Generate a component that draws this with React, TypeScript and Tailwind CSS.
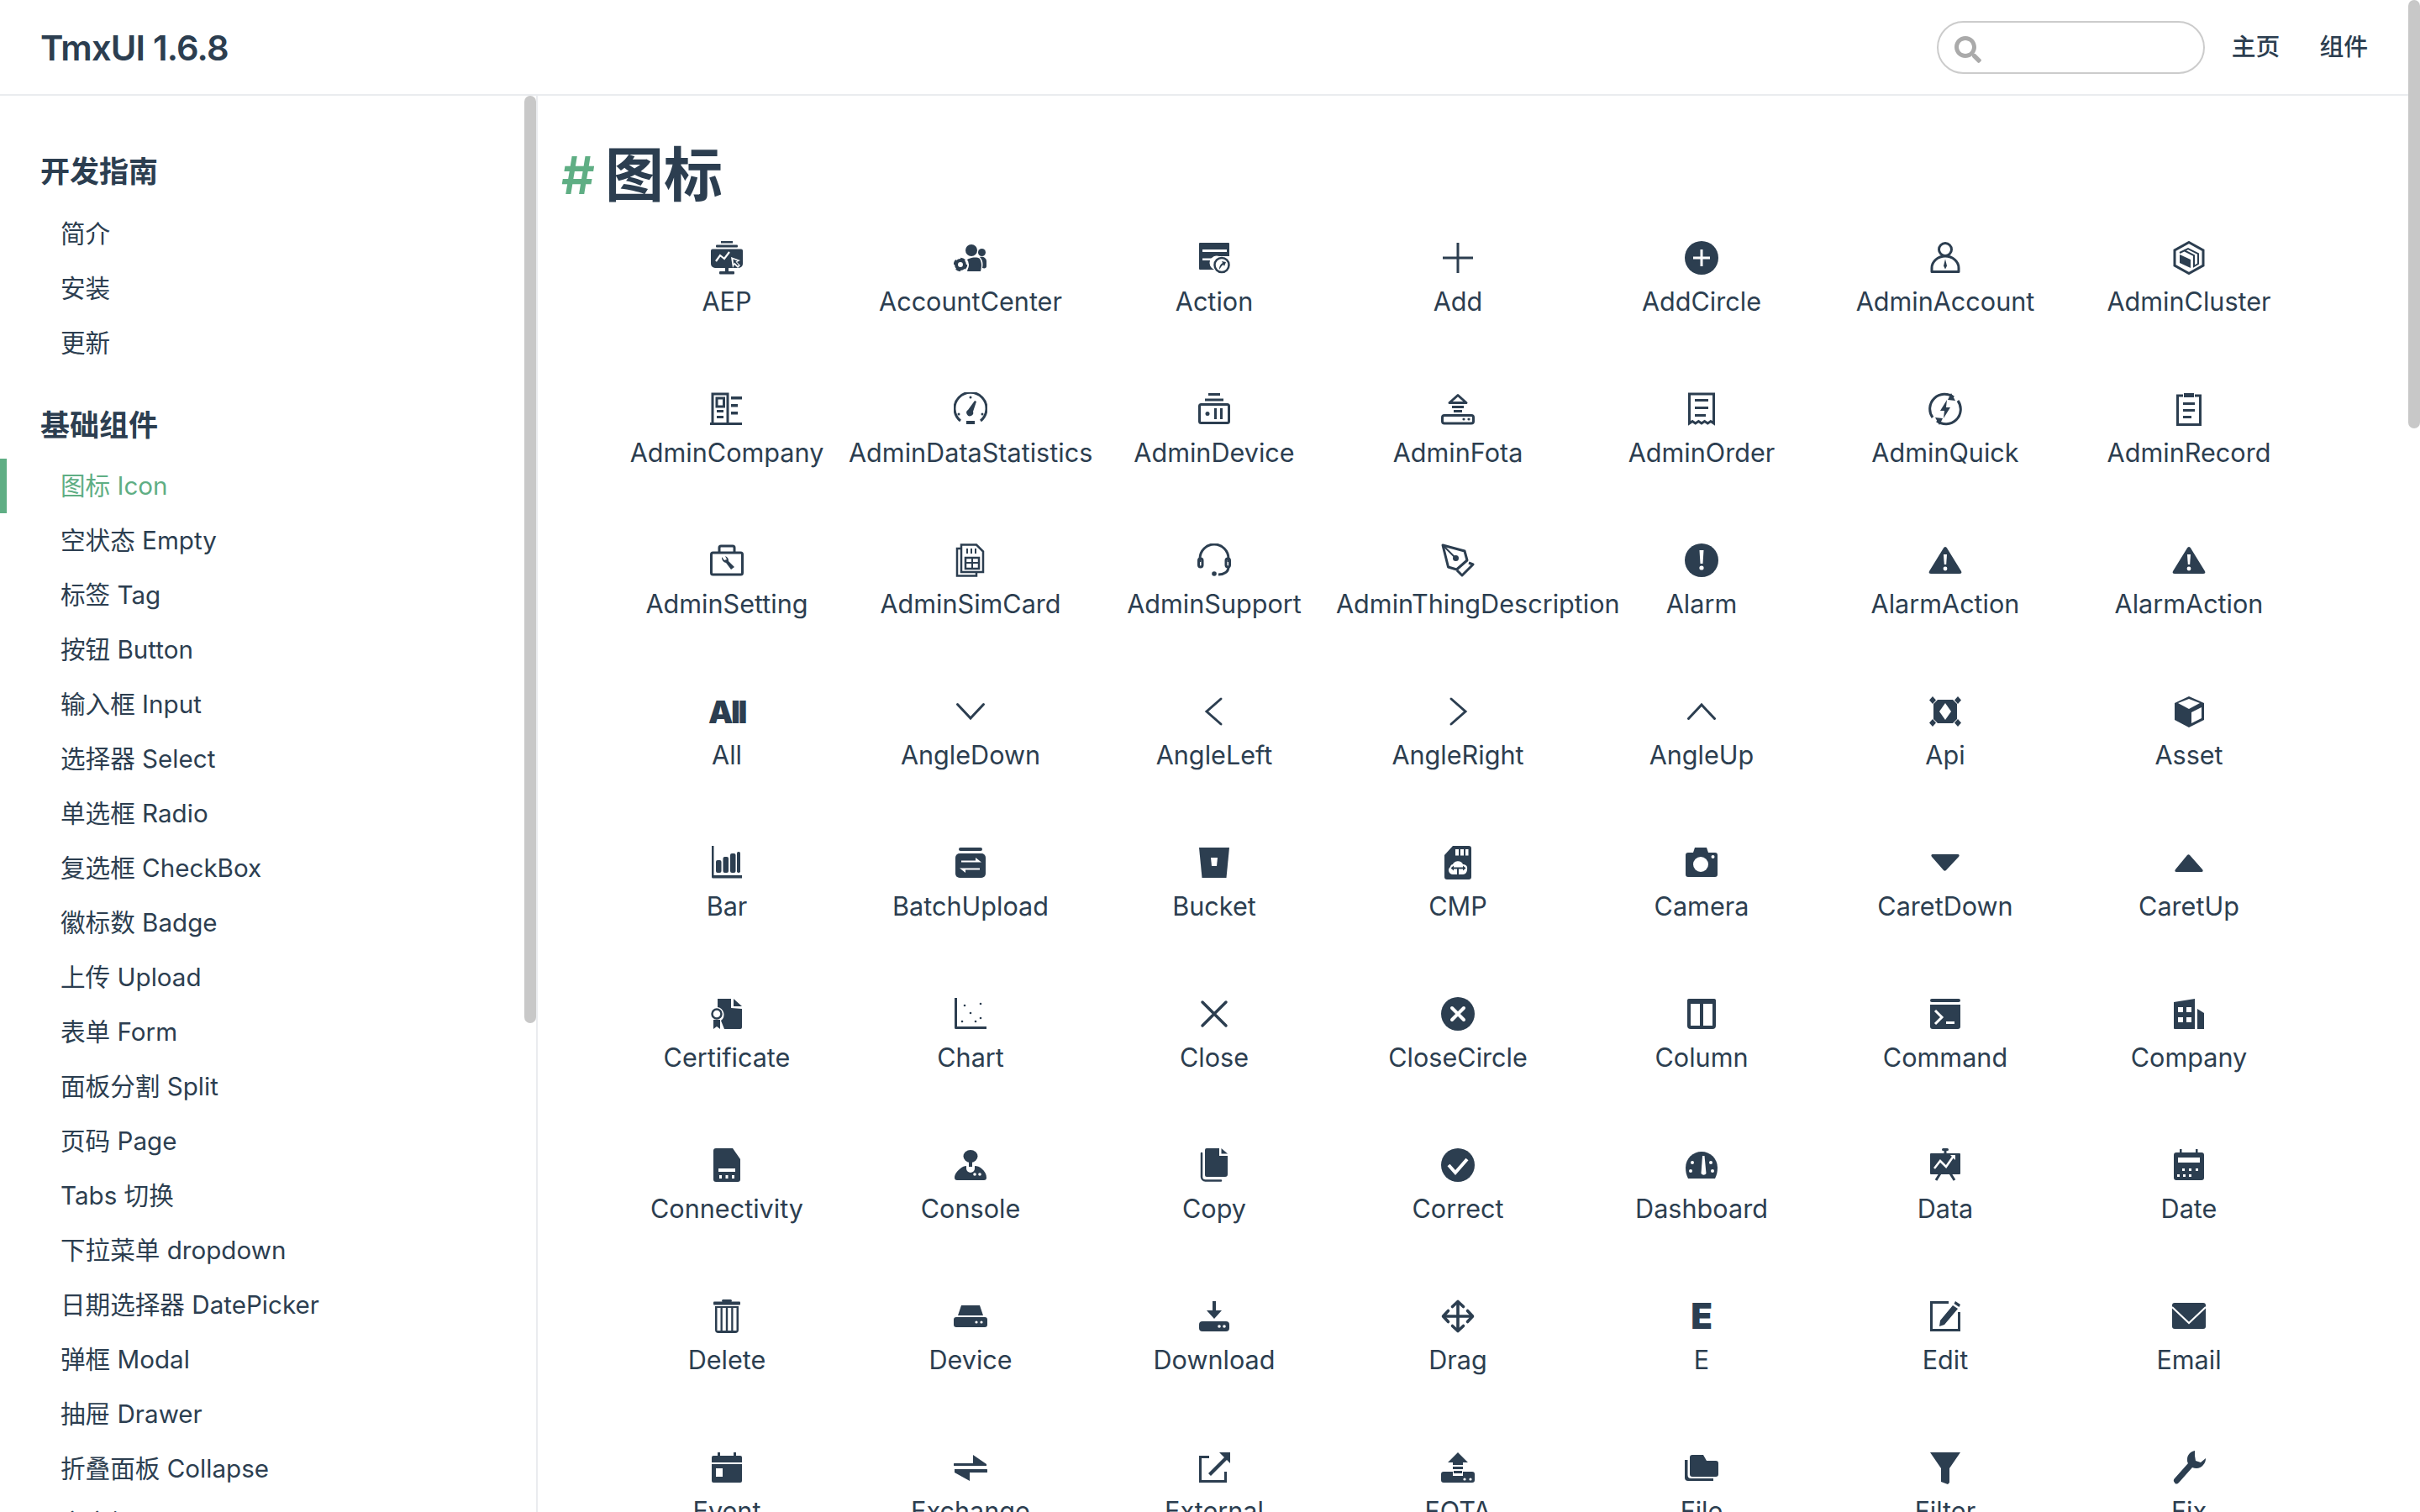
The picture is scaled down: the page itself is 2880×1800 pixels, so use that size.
import type { ReactNode } from "react";
import { FaSearch } from "react-icons/fa";

const W = "#fff";

function Svg({ children }: { children: ReactNode }) {
  return (
    <svg viewBox="0 0 40 40" className="w-10 h-10 fill-current">
      {children}
    </svg>
  );
}

// outline icons share a stroke and no fill
function Line({ children, w = 3 }: { children: ReactNode; w?: number }) {
  return (
    <g fill="none" stroke="currentColor" strokeWidth={w}>
      {children}
    </g>
  );
}

function Gear({ x, y, r }: { x: number; y: number; r: number }) {
  return (
    <g>
      <circle cx={x} cy={y} r={r * 0.62} fill="none" stroke="currentColor" strokeWidth={r * 0.5} />
      <circle cx={x} cy={y} r={r * 0.88} fill="none" stroke="currentColor" strokeWidth={r * 0.3} strokeDasharray={`${r * 0.69} ${r * 0.69}`} />
    </g>
  );
}

const icons: Record<string, ReactNode> = {
  AEP: (
    <>
      <rect x="13" y="0" width="14" height="2.5" />
      <rect x="7" y="4.5" width="26" height="3" rx="1" />
      <path d="M3 9.5h34a2 2 0 0 1 2 2V27a5 5 0 0 1-5 5H6a5 5 0 0 1-5-5V11.500a2 2 0 0 1 2-2z" />
      <rect x="18" y="32" width="4" height="4" />
      <rect x="11" y="36" width="18" height="3.500" rx="1" />
      <polyline points="7,24 12,17 17,21 23,13" fill="none" stroke={W} strokeWidth="2.2" />
      <path d="M25 19l11 4-4 2 4 4-3 3-4-4-2 4z" fill={W} />
      <path d="M27.500 21.500l5 2-2 1 3.500 4-1 1-4-4-1 2z" />
    </>
  ),
  AccountCenter: (
    <>
      <circle cx="21" cy="11" r="7" />
      <circle cx="33.500" cy="13.500" r="4.500" />
      <path d="M16 36l2-8-4-4c3-4 13-6 17-3 3 5 2 11 1 15z" />
      <path d="M31 19c4-1 8 1 8 5v6c0 2-2 3-5 2 1-4 1-9-3-13z" />
      <circle cx="8" cy="28" r="10" fill={W} />
      <Gear x={8} y={28} r={8} />
    </>
  ),
  Action: (
    <>
      <path d="M3 2h34a1 1 0 0 1 1 1v15H26a8 8 0 0 0-6 16H3a1 1 0 0 1-1-1V3a1 1 0 0 1 1-1z" />
      <rect x="6" y="10" width="29" height="3" fill={W} />
      <rect x="6" y="20.500" width="11" height="2.500" fill={W} />
      <Line w={2.5}>
        <circle cx="29" cy="28.500" r="8.500" />
      </Line>
      <path d="M26 34c0-4 1-6 4-8l-1-2 5 1-2 5-1-2c-2 1-3 3-5 6z" />
    </>
  ),
  Add: (
    <Line>
      <path d="M2 20h36M20 2v36" />
    </Line>
  ),
  AddCircle: (
    <>
      <circle cx="20" cy="20" r="20" />
      <path d="M18.500 10h3v8.500H30v3h-8.500V30h-3v-8.500H10v-3h8.500z" fill={W} />
    </>
  ),
  AdminAccount: (
    <>
      <Line>
        <circle cx="20" cy="10" r="7.500" />
        <path d="M4 36.500V32a16 14 0 0 1 32 0v4.500z" strokeLinejoin="round" />
      </Line>
      <path d="M20 21.500l2 8-2 4-2-4z" />
    </>
  ),
  AdminCluster: (
    <>
      <Line>
        <path d="M20 1.500L37 11v18l-17 9.500L3 29V11z" />
        <path d="M9 14l10-5 12 6v12l-5 3V17L14 11" strokeWidth="2" />
      </Line>
      <path d="M9 16l13 6v10l-13-6z" />
    </>
  ),
  AdminCompany: (
    <>
      <Line>
        <path d="M3 38V2h18v36" />
        <rect x="8" y="7" width="8.500" height="10" />
      </Line>
      <rect x="0" y="36" width="38" height="3" />
      <rect x="8" y="21" width="8" height="3" />
      <rect x="8" y="28" width="8" height="3" />
      <rect x="25" y="5" width="13" height="3.500" />
      <rect x="25" y="14" width="8" height="3.500" />
      <rect x="25" y="23" width="8" height="3.500" />
    </>
  ),
  AdminDataStatistics: (
    <>
      <Line>
        <path d="M8 34A19 19 0 1 1 32 34" />
      </Line>
      <path d="M25 10l2 1-4 12a4 4 0 1 1-6-2z" />
      <circle cx="20" cy="6" r="1.500" />
      <circle cx="6" cy="26" r="1.500" />
      <circle cx="34" cy="26" r="1.500" />
      <rect x="15" y="34" width="10" height="4" />
    </>
  ),
  AdminDevice: (
    <>
      <rect x="13" y="1" width="14" height="3" />
      <rect x="9" y="7.500" width="22" height="3" />
      <Line>
        <rect x="2.500" y="14.500" width="35" height="22" rx="2" />
      </Line>
      <circle cx="12" cy="25.500" r="2.500" />
      <rect x="20" y="19" width="3" height="13" />
      <rect x="27" y="19" width="3" height="13" />
    </>
  ),
  AdminFota: (
    <>
      <Line>
        <path d="M20 3.500L30 12.500H10z" strokeLinejoin="round" />
        <rect x="1.500" y="27.500" width="37" height="9.500" rx="2.500" />
      </Line>
      <rect x="13" y="16" width="14" height="3" />
      <rect x="15" y="21" width="10" height="3" />
      <circle cx="27" cy="32" r="1.600" />
      <circle cx="33" cy="32" r="1.600" />
    </>
  ),
  AdminOrder: (
    <>
      <Line>
        <path d="M5.500 2h29v35l-3.600-2.500-3.600 2.500-3.700-2.500-3.600 2.500-3.600-2.500-3.700 2.500-3.600-2.500-3.600 2.500z" />
      </Line>
      <rect x="12" y="8" width="16" height="3" />
      <rect x="12" y="17" width="16" height="3" />
      <rect x="12" y="26" width="13" height="3" />
    </>
  ),
  AdminQuick: (
    <>
      <Line>
        <path d="M30 6A17.500 17.500 0 0 0 5 30" />
        <path d="M10 34A17.500 17.500 0 0 0 35 10" />
      </Line>
      <path d="M27 1l5 9-9-1zM13 39l-5-9 9 1z" />
      <path d="M22 9l-8 13h5l-1 9 8-13h-5z" />
    </>
  ),
  AdminRecord: (
    <>
      <Line>
        <path d="M13 4H6.500v34.500h27V4H27" />
      </Line>
      <rect x="14" y="1" width="12" height="5" />
      <rect x="13" y="12" width="14" height="3" />
      <rect x="13" y="20" width="14" height="3" />
      <rect x="13" y="28" width="10" height="3" />
    </>
  ),
  AdminSetting: (
    <>
      <Line>
        <rect x="1.500" y="11" width="37" height="26" rx="2" />
        <path d="M11 11V5a2 2 0 0 1 2-2h14a2 2 0 0 1 2 2v6" />
      </Line>
      <path d="M14 16a6 6 0 0 0 5 7l6 8 4-3-7-7a6 6 0 0 0-4-6l2 4-3 1z" />
    </>
  ),
  AdminSimCard: (
    <>
      <Line w={2.5}>
        <path d="M9 1.500h18l8 8V34H9z" />
        <path d="M9 6H4v32.500h23V34" />
        <rect x="14" y="17" width="16" height="13" />
      </Line>
      <rect x="15" y="6" width="2" height="6" />
      <rect x="20" y="6" width="2" height="6" />
      <rect x="25" y="6" width="2" height="6" />
      <path d="M21 17h2v13h-2zM14 22h16v2H14z" />
    </>
  ),
  AdminSupport: (
    <>
      <Line>
        <path d="M3 22v-4a17 17 0 0 1 34 0v4" />
        <rect x="1.500" y="18" width="4.500" height="10" rx="2.200" />
        <rect x="34" y="18" width="4.500" height="10" rx="2.200" />
        <path d="M37 28c0 6-6 9-12 9" />
      </Line>
      <circle cx="20" cy="36" r="2.800" />
    </>
  ),
  AdminThingDescription: (
    <>
      <Line>
        <path d="M2 2l26 7 3 11-12.500 11-10-3z" strokeLinejoin="round" />
        <path d="M33 23l5 2-13 13-6-6" strokeLinejoin="round" />
      </Line>
      <path d="M2 2l15 15" stroke="currentColor" strokeWidth="2" fill="none" />
      <circle cx="17.500" cy="17.500" r="3.500" />
    </>
  ),
  Alarm: (
    <>
      <circle cx="20" cy="20" r="20" />
      <path d="M17.500 8h5l-1 16h-3z" fill={W} />
      <circle cx="20" cy="29" r="2.600" fill={W} />
    </>
  ),
  AlarmAction: (
    <>
      <path d="M20 4c1 0 2 1 3 3l16 26c1 2 0 3-2 3H3c-2 0-3-1-2-3L17 7c1-2 2-3 3-3z" />
      <path d="M18 13h4l-.8 12h-2.400z" fill={W} />
      <circle cx="20" cy="30" r="2.400" fill={W} />
    </>
  ),
  AngleDown: (
    <Line>
      <path d="M4.500 11.500L20 28l15.500-16.500" strokeLinecap="round" />
    </Line>
  ),
  AngleLeft: (
    <Line>
      <path d="M28 5L11 20l17 15" strokeLinecap="round" />
    </Line>
  ),
  AngleRight: (
    <Line>
      <path d="M12 5l17 15-17 15" strokeLinecap="round" />
    </Line>
  ),
  AngleUp: (
    <Line>
      <path d="M4.500 28.500L20 12l15.500 16.500" strokeLinecap="round" />
    </Line>
  ),
  Api: (
    <>
      <path d="M11 6h18l5 5v18l-5 5H11l-5-5V11z" />
      <path d="M20 10l7 10-7 10-7-10z" fill={W} />
      <path d="M5 2l4 4.500L5 11 1 6.500zM35 2l4 4.500-4 4.500-4-4.500zM5 29l4 4.500L5 38l-4-4.500zM35 29l4 4.500-4 4.500-4-4.500z" />
    </>
  ),
  Asset: (
    <>
      <path d="M20 2l18 8v20l-18 9-17-9V10z" />
      <path d="M7 10l13-5 13 5-13 7z" fill={W} />
      <path d="M23 21l12-6v13l-12 6z" fill={W} />
    </>
  ),
  Bar: (
    <>
      <path d="M2 0h2.500v35H38v3.500H3.500a1.500 1.500 0 0 1-1.500-1.500z" />
      <rect x="7" y="17" width="6.500" height="15" rx="2" />
      <rect x="15.500" y="13" width="6.500" height="19" rx="2" />
      <rect x="24" y="9" width="6.500" height="23" rx="2" />
      <rect x="32" y="7" width="4" height="25" rx="1.700" />
    </>
  ),
  BatchUpload: (
    <>
      <rect x="6" y="2" width="28" height="4" rx="2" />
      <rect x="2" y="9" width="36" height="29" rx="5" />
      <path d="M9 17.500h17V14l7 5.500H9zM31 28.500H14V32l-7-5.500h24z" fill={W} />
    </>
  ),
  Bucket: (
    <>
      <path d="M2 2h36l-3.500 36h-29z" />
      <path d="M16 14h8l-1 10h-6z" fill={W} />
    </>
  ),
  CMP: (
    <>
      <path d="M14 0h19a3 3 0 0 1 3 3v34a3 3 0 0 1-3 3H7a3 3 0 0 1-3-3V11z" />
      <rect x="17" y="4" width="4" height="7.500" fill={W} />
      <rect x="23" y="4" width="4" height="7.500" fill={W} />
      <rect x="29" y="4" width="3.500" height="7.500" fill={W} />
      <path d="M14 34a5 5 0 0 1-3-9c0-1 1-3 3-3 1-4 10-6 12 0 3 0 6 2 5 6 0 3-2 6-5 6z" fill={W} />
      <path d="M13 26.500h15M20 26.500v7.500" stroke="currentColor" strokeWidth="2" fill="none" />
      <path d="M15 23.500v6l-3.500-3zM26 23.500v6l3.500-3z" />
    </>
  ),
  Camera: (
    <>
      <path d="M12 2h14l2 6h8a3 3 0 0 1 3 3v23a3 3 0 0 1-3 3H4a3 3 0 0 1-3-3V11a3 3 0 0 1 3-3h6z" />
      <circle cx="19" cy="22" r="9" fill={W} />
      <circle cx="33.500" cy="13" r="2" fill={W} />
    </>
  ),
  CaretDown: <path d="M5 10h30c2 0 2 2 1 3L21 29c-1 1-2 1-3 0L4 13c-1-1-1-3 1-3z" />,
  CaretUp: <path d="M5 31h30c2 0 2-2 1-3L21 11c-1-1-2-1-3 0L4 28c-1 1-1 3 1 3z" />,
  Certificate: (
    <>
      <path d="M9 2h16v11l13 1v22a2 2 0 0 1-2 2H17l-4-10a9 9 0 0 0-4-16z" />
      <path d="M28 2l10 9H28z" />
      <Line w={2.5}>
        <circle cx="8" cy="20" r="5.500" />
      </Line>
      <path d="M4 27h8v11l-4-3-4 3z" />
    </>
  ),
  Chart: (
    <>
      <path d="M1 1h3v34h35v3H2.500A1.500 1.500 0 0 1 1 36.500z" />
      <circle cx="13" cy="10" r="1.300" />
      <circle cx="32" cy="8" r="1.300" />
      <circle cx="20" cy="19" r="1.300" />
      <circle cx="10" cy="29" r="1.300" />
      <circle cx="26" cy="29" r="1.300" />
      <circle cx="32" cy="25" r="1.300" />
    </>
  ),
  Close: (
    <Line w={3.5}>
      <path d="M6 6l28 28M34 6L6 34" strokeLinecap="round" />
    </Line>
  ),
  CloseCircle: (
    <>
      <circle cx="20" cy="20" r="20" />
      <path d="M13 13l14 14M27 13L13 27" stroke={W} strokeWidth="4" strokeLinecap="round" />
    </>
  ),
  Column: (
    <>
      <Line w={4}>
        <rect x="5" y="4" width="30" height="32" rx="2" />
        <path d="M20 4v32" />
      </Line>
      <rect x="3" y="2" width="34" height="6" rx="2" />
    </>
  ),
  Command: (
    <>
      <rect x="2" y="2" width="36" height="4" rx="2" />
      <path d="M2 9h36v26a3 3 0 0 1-3 3H5a3 3 0 0 1-3-3z" />
      <path d="M8 16l8 8-8 8" fill="none" stroke={W} strokeWidth="3" />
      <rect x="21" y="29" width="10" height="3" fill={W} />
    </>
  ),
  Company: (
    <>
      <path d="M2 6l25-4v36H3a1 1 0 0 1-1-1z" />
      <rect x="7" y="12" width="6" height="6" fill={W} />
      <rect x="17" y="12" width="6" height="6" fill={W} />
      <rect x="7" y="24" width="6" height="6" fill={W} />
      <rect x="17" y="24" width="6" height="6" fill={W} />
      <path d="M30 14l8 5v19h-8z" />
    </>
  ),
  Connectivity: (
    <>
      <path d="M7 0h20l9 13v24a3 3 0 0 1-3 3H7a3 3 0 0 1-3-3V3a3 3 0 0 1 3-3z" />
      <rect x="10" y="24" width="20" height="4" fill={W} />
      <rect x="11" y="32" width="3" height="4" fill={W} />
      <rect x="18.500" y="32" width="3" height="4" fill={W} />
      <rect x="26" y="32" width="3" height="4" fill={W} />
    </>
  ),
  Console: (
    <>
      <ellipse cx="20" cy="9.500" rx="8.500" ry="7.500" />
      <rect x="18" y="16" width="4" height="6" />
      <path d="M8 24c2-2 5-3 7-3v3a5 5 0 0 0 10 0v-3c3 0 6 1 8 3 4 3 6 7 6 11a3 3 0 0 1-3 3H4a3 3 0 0 1-3-3c0-4 3-8 7-11z" />
      <circle cx="25" cy="31" r="1.800" fill={W} />
      <circle cx="31" cy="31" r="1.800" fill={W} />
    </>
  ),
  Copy: (
    <>
      <path d="M11 0h15v9h10v22a3 3 0 0 1-3 3H11a2 2 0 0 1-2-2V2a2 2 0 0 1 2-2z" />
      <path d="M28.500 0l7.500 6.500h-7.500z" />
      <Line w={2.5}>
        <path d="M5 6v28a4.500 4.500 0 0 0 4.500 4.500H28" strokeLinecap="round" />
      </Line>
    </>
  ),
  Correct: (
    <>
      <circle cx="20" cy="20" r="20" />
      <path d="M9 20l8 9 14-16" fill="none" stroke={W} strokeWidth="4" />
    </>
  ),
  Dashboard: (
    <>
      <path d="M20 4a19 19 0 0 1 19 19c0 5-1 9-3 13H4c-2-4-3-8-3-13A19 19 0 0 1 20 4z" />
      <path d="M21 9h2.500l2 21a3.500 3.500 0 0 1-6 0z" fill={W} />
      <circle cx="9" cy="17" r="2" fill={W} />
      <circle cx="7" cy="27" r="2" fill={W} />
      <circle cx="31" cy="17" r="2" fill={W} />
      <circle cx="33" cy="27" r="2" fill={W} />
    </>
  ),
  Data: (
    <>
      <rect x="16" y="0" width="8" height="3" rx="1.500" />
      <rect x="18.500" y="3" width="3" height="3" />
      <rect x="2" y="6" width="36" height="25" rx="1" />
      <path d="M7 24l7-9 7 7 9-13" fill="none" stroke={W} strokeWidth="2.500" />
      <path d="M26 8h6v6z" fill={W} />
      <path d="M14 30l-5 8M26 30l5 8" stroke="currentColor" strokeWidth="3" fill="none" />
    </>
  ),
  Date: (
    <>
      <rect x="9" y="1" width="2.500" height="6" />
      <rect x="28" y="1" width="2.500" height="6" />
      <rect x="2" y="5" width="36" height="33" rx="3" />
      <rect x="7" y="11" width="26" height="6" fill={W} />
      <rect x="12" y="24" width="3" height="3" fill={W} />
      <rect x="20" y="24" width="3" height="3" fill={W} />
      <rect x="28" y="24" width="3" height="3" fill={W} />
      <rect x="6" y="31" width="3" height="3" fill={W} />
      <rect x="13" y="31" width="3" height="3" fill={W} />
      <rect x="20" y="31" width="3" height="3" fill={W} />
    </>
  ),
  Delete: (
    <>
      <rect x="14" y="0" width="12" height="3" rx="1.500" />
      <rect x="4" y="2.500" width="32" height="4" rx="1" />
      <path d="M6 8h28v28a4 4 0 0 1-4 4H10a4 4 0 0 1-4-4z" />
      <rect x="8.500" y="10" width="4" height="27" fill={W} />
      <rect x="14.800" y="10" width="4" height="27" fill={W} />
      <rect x="21.200" y="10" width="4" height="27" fill={W} />
      <rect x="27.500" y="10" width="4" height="27" fill={W} />
    </>
  ),
  Device: (
    <>
      <path d="M9 7h22l4 12H5z" />
      <path d="M3 21h34a3 3 0 0 1 3 3v6a3 3 0 0 1-3 3H3a3 3 0 0 1-3-3v-6a3 3 0 0 1 3-3z" />
      <circle cx="27" cy="27" r="1.600" fill={W} />
      <circle cx="33" cy="27" r="1.600" fill={W} />
    </>
  ),
  Download: (
    <>
      <path d="M18 2h4v11h7L20 23 11 13h7z" />
      <rect x="2" y="26" width="36" height="12" rx="4" />
      <circle cx="26" cy="32" r="1.800" fill={W} />
      <circle cx="32" cy="32" r="1.800" fill={W} />
    </>
  ),
  Drag: (
    <g fill="none" stroke="currentColor" strokeWidth="3.600" strokeLinecap="round" strokeLinejoin="round">
      <path d="M20 3v34M3 20h34" />
      <path d="M13.500 8.500L20 2.500l6.500 6M13.500 31.500l6.500 6 6.500-6M8.500 13.500L2.500 20l6 6.500M31.500 13.500l6 6.500-6 6.500" />
    </g>
  ),
  Edit: (
    <>
      <Line>
        <path d="M24 3.500H3.500v33h33V15" />
      </Line>
      <path d="M29 7l6 4-16 19-6 2 1-7zM32 2l6 4-1.500 3-6-4z" />
    </>
  ),
  Email: (
    <>
      <path d="M3 4h34a3 3 0 0 1 3 3v25a3 3 0 0 1-3 3H3a3 3 0 0 1-3-3V7a3 3 0 0 1 3-3z" />
      <path d="M0 9l20 19L40 9" fill="none" stroke={W} strokeWidth="2" />
    </>
  ),
  Event: (
    <>
      <rect x="9" y="2" width="3" height="6" />
      <rect x="28" y="2" width="3" height="6" />
      <path d="M4 6h32a2 2 0 0 1 2 2v6H2V8a2 2 0 0 1 2-2z" />
      <path d="M2 16h36v20a2 2 0 0 1-2 2H4a2 2 0 0 1-2-2z" />
      <rect x="7" y="21" width="8" height="10" fill={W} />
    </>
  ),
  Exchange: (
    <path d="M23 5l16 11v2H1a1.500 1.500 0 0 1 0-3h22zM39 22a1.500 1.500 0 0 1 0 4H19v10L1 26v-4z" />
  ),
  External: (
    <>
      <Line>
        <path d="M14 7.500H3.500v29h30V25" />
      </Line>
      <path d="M26 2h13v13l-4-4-19 19-3-3 19-19z" />
    </>
  ),
  FOTA: (
    <>
      <path d="M20 2l12 12h-6v3H14v-3H8z" />
      <rect x="14" y="19" width="12" height="3" />
      <rect x="15" y="24" width="10" height="3" />
      <path d="M3 25h11v5h12v-5h11a3 3 0 0 1 3 3v7a3 3 0 0 1-3 3H3a3 3 0 0 1-3-3v-7a3 3 0 0 1 3-3z" />
      <circle cx="28" cy="34" r="1.600" fill={W} />
      <circle cx="35" cy="34" r="1.600" fill={W} />
    </>
  ),
  File: (
    <>
      <path d="M9 5h13l4 7h11a3 3 0 0 1 3 3v13a3 3 0 0 1-3 3H9a3 3 0 0 1-3-3V8a3 3 0 0 1 3-3z" />
      <path d="M0 11h3.500v18a4 4 0 0 0 4 4H34v3H4a4 4 0 0 1-4-4z" />
    </>
  ),
  Filter: <path d="M2 2h36L25 21v17l-2 2-8-3V21z" />,
  Fix: (
    <path d="M27 0c-5 1-9 5-9 10 0 2 0 4 1 5L3 33c-2 2-1 4 0 5 1 2 3 2 5 0L24 20c5 2 10 1 13-3 2-2 3-5 3-8l-6 5-6-2-1-6z" />
  ),
};

function BoldGlyph({ children, size }: { children: string; size: string }) {
  return <span className={`flex h-10 items-center justify-center font-black leading-none ${size}`}>{children}</span>;
}

const grid = [
  "AEP", "AccountCenter", "Action", "Add", "AddCircle", "AdminAccount", "AdminCluster",
  "AdminCompany", "AdminDataStatistics", "AdminDevice", "AdminFota", "AdminOrder", "AdminQuick", "AdminRecord",
  "AdminSetting", "AdminSimCard", "AdminSupport", "AdminThingDescription", "Alarm", "AlarmAction", "AlarmAction",
  "All", "AngleDown", "AngleLeft", "AngleRight", "AngleUp", "Api", "Asset",
  "Bar", "BatchUpload", "Bucket", "CMP", "Camera", "CaretDown", "CaretUp",
  "Certificate", "Chart", "Close", "CloseCircle", "Column", "Command", "Company",
  "Connectivity", "Console", "Copy", "Correct", "Dashboard", "Data", "Date",
  "Delete", "Device", "Download", "Drag", "E", "Edit", "Email",
  "Event", "Exchange", "External", "FOTA", "File", "Filter", "Fix",
];

const guide = ["简介", "安装", "更新"];
const basics = [
  "图标 Icon", "空状态 Empty", "标签 Tag", "按钮 Button", "输入框 Input", "选择器 Select", "单选框 Radio",
  "复选框 CheckBox", "徽标数 Badge", "上传 Upload", "表单 Form", "面板分割 Split", "页码 Page", "Tabs 切换",
  "下拉菜单 dropdown", "日期选择器 DatePicker", "弹框 Modal", "抽屉 Drawer", "折叠面板 Collapse", "文字提示 Tooltip",
];

function SideItem({ label, active }: { label: string; active?: boolean }) {
  return (
    <a
      className={`flex h-[65px] shrink-0 items-center border-l-8 pl-[64px] text-[29.6px] ${
        active ? "border-[#5fae84] text-[#5fae84]" : "border-transparent"
      }`}
    >
      {label}
    </a>
  );
}

export default function App() {
  return (
    <div
      className="flex h-screen w-full overflow-hidden bg-white text-[#2c3e50]"
      style={{ fontFamily: 'Inter, "Noto Sans CJK SC", sans-serif' }}
    >
      <div className="flex h-full w-[2866px] flex-col">
        <header className="flex h-[114px] shrink-0 items-center justify-between border-b-2 border-[#eaecef] px-[48px]">
          <span className="mt-[2px] text-[41.6px] font-semibold tracking-[-0.8px]">TmxUI 1.6.8</span>
          <div className="flex items-center">
            <div className="flex h-[63px] w-[319px] items-center rounded-[32px] border-2 border-[#cccccc] pl-[19px] text-[#aaaaaa]">
              <FaSearch className="mt-[5px] h-[32px] w-[32px]" />
            </div>
            <a className="ml-[32px] text-[28.8px] font-medium">主页</a>
            <a className="ml-[47px] text-[28.8px] font-medium">组件</a>
          </div>
        </header>

        <div className="flex min-h-0 flex-1">
          <aside className="flex w-[640px] shrink-0 overflow-hidden border-r-2 border-[#eaecef]">
            <nav className="flex min-w-0 flex-1 flex-col pt-[55px]">
              <h3 className="mb-[7px] flex h-[70px] shrink-0 items-center pl-[48px] text-[35px] font-semibold">开发指南</h3>
              {guide.map((g) => (
                <SideItem key={g} label={g} />
              ))}
              <h3 className="mb-[5px] mt-[30px] flex h-[70px] shrink-0 items-center pl-[48px] text-[35px] font-semibold">基础组件</h3>
              {basics.map((b, i) => (
                <SideItem key={b} label={b} active={i === 0} />
              ))}
            </nav>
            <div className="w-[14px] shrink-0">
              <div className="h-[1104px] rounded-[7px] bg-[#c8c8c8]" />
            </div>
          </aside>

          <main className="min-w-0 flex-1 overflow-hidden">
            <h1 className="mt-[40px] flex h-[110px] items-center pl-[28px] text-[70px] font-semibold leading-none">
              <span className="mr-[12px] text-[62px] text-[#5fae84]">#</span>
              图标
            </h1>
            <div className="ml-[80px] mt-[23px] grid w-[2030px] auto-rows-[180px] grid-cols-7">
              {grid.map((name, i) => (
                <div key={i} className="min-w-0 whitespace-nowrap text-center">
                  <div className="flex justify-center">
                    {name === "All" ? (
                      <BoldGlyph size="text-[37px] tracking-[-2.5px]">All</BoldGlyph>
                    ) : name === "E" ? (
                      <BoldGlyph size="text-[42px]">E</BoldGlyph>
                    ) : (
                      <Svg>{icons[name]}</Svg>
                    )}
                  </div>
                  <div className="mt-[12px] text-[30.6px] leading-[40px]">{name}</div>
                </div>
              ))}
            </div>
          </main>
        </div>
      </div>
      <div className="w-[14px] shrink-0">
        <div className="h-[510px] rounded-[7px] bg-[#c8c8c8]" />
      </div>
    </div>
  );
}
